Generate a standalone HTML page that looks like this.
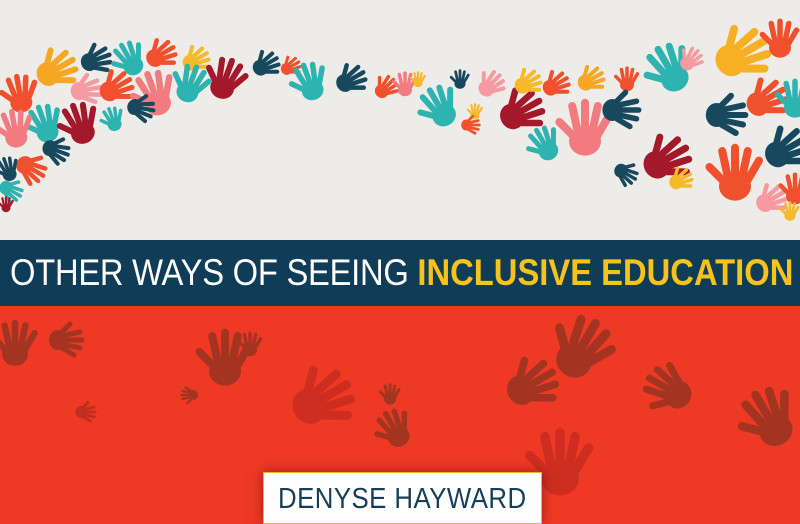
<!DOCTYPE html>
<html><head><meta charset="utf-8"><style>
html,body{margin:0;padding:0}
body{width:800px;height:518px;overflow:hidden;position:relative;background:#ee3a24;font-family:"Liberation Sans",sans-serif}
.top{position:absolute;left:0;top:0;width:800px;height:240px;background:#eeece8}
.band{position:absolute;left:0;top:240px;width:800px;height:66px;background:#0f3d57}
.t{position:absolute;left:10px;top:254px;white-space:nowrap;font-size:37px;line-height:37px;color:#fff;letter-spacing:-0.3px;transform:scaleX(0.885);transform-origin:left}
.t b{color:#f7c21b;font-weight:bold;letter-spacing:0}
.box{position:absolute;left:263px;top:472px;width:277px;height:50px;background:#fff;border:1px solid #f0b52a;box-shadow:0 0 12px rgba(80,0,0,.5)}
.box span{position:absolute;left:14px;top:12px;font-size:29px;line-height:29px;color:#163f57;white-space:nowrap;transform:scaleX(0.89);transform-origin:left;letter-spacing:0.5px}
svg{position:absolute;left:0;top:0}
</style></head><body>
<div class="top"></div>
<svg width="800" height="518" viewBox="0 0 800 518">
<defs>
<g id="h"><ellipse cx="20" cy="27" rx="10" ry="9" fill="currentColor"/><g stroke="currentColor" stroke-width="5" stroke-linecap="round"><line x1="12" y1="23" x2="4" y2="15"/><line x1="15" y1="19" x2="12" y2="5"/><line x1="20" y1="19" x2="20" y2="3"/><line x1="25" y1="19" x2="28" y2="5"/><line x1="28" y1="23" x2="35" y2="11"/></g></g>
</defs>
<g>
<use href="#h" color="#f5a623" transform="translate(55 70) rotate(60) scale(1.2) translate(-20 -20)"/>
<use href="#h" color="#17485e" transform="translate(95 60) rotate(70) scale(.9) translate(-20 -20)"/>
<use href="#h" color="#2db3b0" transform="translate(130 60) rotate(-30) scale(1) translate(-20 -20)"/>
<use href="#h" color="#f0502e" transform="translate(160 55) rotate(60) scale(.9) translate(-20 -20)"/>
<use href="#h" color="#f5b92a" transform="translate(195 60) rotate(60) scale(.8) translate(-20 -20)"/>
<use href="#h" color="#a3182a" transform="translate(225 80) rotate(20) scale(1.2) translate(-20 -20)"/>
<use href="#h" color="#17485e" transform="translate(265 65) rotate(60) scale(.8) translate(-20 -20)"/>
<use href="#h" color="#f0502e" transform="translate(290 67) rotate(60) scale(.6) translate(-20 -20)"/>
<use href="#h" color="#2db3b0" transform="translate(310 83) rotate(-20) scale(1.1) translate(-20 -20)"/>
<use href="#h" color="#17485e" transform="translate(350 80) rotate(60) scale(.9) translate(-20 -20)"/>
<use href="#h" color="#f0502e" transform="translate(385 88) rotate(45) scale(.7) translate(-20 -20)"/>
<use href="#h" color="#f0502e" transform="translate(20 95) rotate(-10) scale(1.1) translate(-20 -20)"/>
<use href="#h" color="#f49aa0" transform="translate(85 90) rotate(80) scale(.9) translate(-20 -20)"/>
<use href="#h" color="#f0502e" transform="translate(115 88) rotate(60) scale(1) translate(-20 -20)"/>
<use href="#h" color="#f27b80" transform="translate(155 95) rotate(-20) scale(1.3) translate(-20 -20)"/>
<use href="#h" color="#2db3b0" transform="translate(190 85) rotate(20) scale(1.1) translate(-20 -20)"/>
<use href="#h" color="#17485e" transform="translate(140 108) rotate(100) scale(.8) translate(-20 -20)"/>
<use href="#h" color="#2db3b0" transform="translate(45 125) rotate(-20) scale(1.1) translate(-20 -20)"/>
<use href="#h" color="#a3182a" transform="translate(80 125) rotate(-20) scale(1.2) translate(-20 -20)"/>
<use href="#h" color="#2db3b0" transform="translate(113 120) rotate(-20) scale(.7) translate(-20 -20)"/>
<use href="#h" color="#f27b80" transform="translate(15 130) rotate(-10) scale(1.1) translate(-20 -20)"/>
<use href="#h" color="#17485e" transform="translate(55 150) rotate(110) scale(.8) translate(-20 -20)"/>
<use href="#h" color="#f0502e" transform="translate(30 168) rotate(120) scale(.9) translate(-20 -20)"/>
<use href="#h" color="#17485e" transform="translate(8 170) rotate(-20) scale(.7) translate(-20 -20)"/>
<use href="#h" color="#2db3b0" transform="translate(10 190) rotate(120) scale(.7) translate(-20 -20)"/>
<use href="#h" color="#a3182a" transform="translate(6 205) scale(.45) translate(-20 -20)"/>
<use href="#h" color="#f27b80" transform="translate(405 85) scale(.7) translate(-20 -20)"/>
<use href="#h" color="#f5b92a" transform="translate(418 80) scale(.45) translate(-20 -20)"/>
<use href="#h" color="#2db3b0" transform="translate(440 108) rotate(-30) scale(1.2) translate(-20 -20)"/>
<use href="#h" color="#17485e" transform="translate(460 80) scale(.55) translate(-20 -20)"/>
<use href="#h" color="#f49aa0" transform="translate(490 85) rotate(45) scale(.8) translate(-20 -20)"/>
<use href="#h" color="#f5b92a" transform="translate(475 112) scale(.45) translate(-20 -20)"/>
<use href="#h" color="#f0502e" transform="translate(470 125) rotate(90) scale(.55) translate(-20 -20)"/>
<use href="#h" color="#a3182a" transform="translate(520 112) rotate(60) scale(1.3) translate(-20 -20)"/>
<use href="#h" color="#f5b92a" transform="translate(527 83) rotate(60) scale(.8) translate(-20 -20)"/>
<use href="#h" color="#f0502e" transform="translate(555 85) rotate(60) scale(.8) translate(-20 -20)"/>
<use href="#h" color="#f5a623" transform="translate(590 80) rotate(60) scale(.8) translate(-20 -20)"/>
<use href="#h" color="#f0502e" transform="translate(627 80) scale(.7) translate(-20 -20)"/>
<use href="#h" color="#2db3b0" transform="translate(545 145) rotate(-30) scale(1) translate(-20 -20)"/>
<use href="#h" color="#f27b80" transform="translate(585 130) scale(1.6) translate(-20 -20)"/>
<use href="#h" color="#17485e" transform="translate(620 110) rotate(90) scale(1.1) translate(-20 -20)"/>
<use href="#h" color="#17485e" transform="translate(625 173) rotate(120) scale(.7) translate(-20 -20)"/>
<use href="#h" color="#a3182a" transform="translate(665 160) rotate(60) scale(1.4) translate(-20 -20)"/>
<use href="#h" color="#f5b92a" transform="translate(680 180) rotate(60) scale(.7) translate(-20 -20)"/>
<use href="#h" color="#2db3b0" transform="translate(670 70) rotate(-30) scale(1.4) translate(-20 -20)"/>
<use href="#h" color="#f49aa0" transform="translate(690 60) rotate(40) scale(.7) translate(-20 -20)"/>
<use href="#h" color="#f7b023" transform="translate(740 55) rotate(60) scale(1.6) translate(-20 -20)"/>
<use href="#h" color="#f0502e" transform="translate(780 40) scale(1.1) translate(-20 -20)"/>
<use href="#h" color="#17485e" transform="translate(725 115) rotate(90) scale(1.2) translate(-20 -20)"/>
<use href="#h" color="#f0502e" transform="translate(765 100) rotate(60) scale(1.2) translate(-20 -20)"/>
<use href="#h" color="#2db3b0" transform="translate(795 100) scale(1.1) translate(-20 -20)"/>
<use href="#h" color="#f0502e" transform="translate(735 175) scale(1.6) translate(-20 -20)"/>
<use href="#h" color="#17485e" transform="translate(785 150) rotate(60) scale(1.3) translate(-20 -20)"/>
<use href="#h" color="#f49aa0" transform="translate(770 200) rotate(60) scale(.9) translate(-20 -20)"/>
<use href="#h" color="#f0502e" transform="translate(795 190) scale(.9) translate(-20 -20)"/>
<use href="#h" color="#f5b92a" transform="translate(790 212) scale(.55) translate(-20 -20)"/>
</g>
<g opacity="0.75">
<use href="#h" color="#8a3322" transform="translate(15 345) scale(1.3) translate(-20 -20)"/>
<use href="#h" color="#8a3322" transform="translate(65 340) rotate(90) scale(1) translate(-20 -20)"/>
<use href="#h" color="#b02a1e" transform="translate(85 412) rotate(90) scale(.6) translate(-20 -20)"/>
<use href="#h" color="#8a3322" transform="translate(225 360) scale(1.6) translate(-20 -20)"/>
<use href="#h" color="#8a3322" transform="translate(250 345) scale(.7) translate(-20 -20)"/>
<use href="#h" color="#8a3322" transform="translate(190 395) rotate(-90) scale(.5) translate(-20 -20)"/>
<use href="#h" color="#c42a1f" transform="translate(320 400) rotate(60) scale(1.8) translate(-20 -20)"/>
<use href="#h" color="#8a3322" transform="translate(395 430) rotate(-30) scale(1.1) translate(-20 -20)"/>
<use href="#h" color="#8a3322" transform="translate(390 395) scale(.6) translate(-20 -20)"/>
<use href="#h" color="#8a3322" transform="translate(580 350) rotate(30) scale(1.8) translate(-20 -20)"/>
<use href="#h" color="#8a3322" transform="translate(530 385) rotate(60) scale(1.5) translate(-20 -20)"/>
<use href="#h" color="#8a3322" transform="translate(670 390) rotate(-60) scale(1.4) translate(-20 -20)"/>
<use href="#h" color="#c42a1f" transform="translate(560 465) scale(1.9) translate(-20 -20)"/>
<use href="#h" color="#8a3322" transform="translate(770 420) rotate(-30) scale(1.7) translate(-20 -20)"/>
</g>
</svg>
<div class="band"></div>
<div class="t">OTHER WAYS OF SEEING <b>INCLUSIVE EDUCATION</b></div>
<div class="box"><span>DENYSE HAYWARD</span></div>
</body></html>
